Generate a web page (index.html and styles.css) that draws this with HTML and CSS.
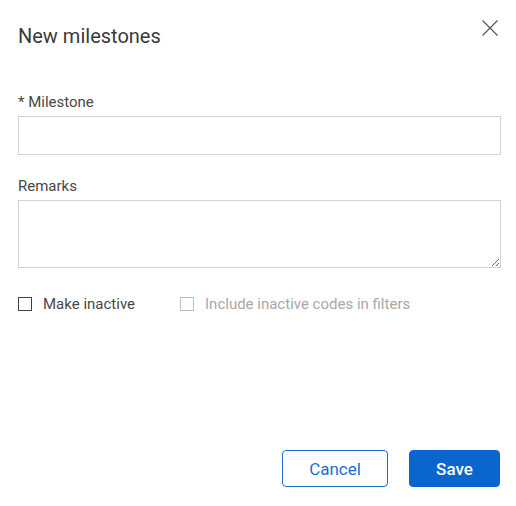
FILE: index.html
```html
<!DOCTYPE html>
<html>
<head>
<meta charset="utf-8">
<link rel="stylesheet" href="styles.css">
</head>
<body>
<div class="dialog">
  <div class="header">
    <h1 class="title">New milestones</h1>
    <button class="close" aria-label="Close">
      <svg width="16" height="16" viewBox="0 0 16 16"><path d="M0.5 0.5 L15.5 15.5 M15.5 0.5 L0.5 15.5" stroke="#555" stroke-width="1.2" fill="none"/></svg>
    </button>
  </div>
  <label class="label first">* Milestone</label>
  <input class="input" type="text">
  <label class="label">Remarks</label>
  <textarea class="textarea"></textarea>
  <div class="checks">
    <label class="check"><input type="checkbox" class="box"><span>Make inactive</span></label>
    <label class="check disabled"><input type="checkbox" class="box" disabled><span>Include inactive codes in filters</span></label>
  </div>
  <div class="footer">
    <button class="btn cancel">Cancel</button>
    <button class="btn save">Save</button>
  </div>
</div>
</body>
</html>
```
FILE: styles.css
```css
* { box-sizing: border-box; }
html, body { margin: 0; padding: 0; background: #fff; }
body { font-family: Roboto, "Liberation Sans", sans-serif; color: #333; }
.dialog {
  height: 506px;
  padding: 0 15px 19px 18px;
  display: flex;
  flex-direction: column;
}
.header {
  display: flex;
  justify-content: space-between;
  align-items: flex-start;
  padding-top: 24px;
}
.title {
  margin: 0;
  font-size: 20px;
  font-weight: 400;
  line-height: 24px;
  color: #3a3a3a;
}
.close {
  border: 0;
  background: none;
  padding: 0;
  margin: -4px 3px 0 0;
  width: 16px;
  height: 16px;
  cursor: pointer;
}
.close svg { display: block; }
.label {
  display: block;
  font-size: 15px;
  line-height: 20px;
  color: #484848;
  margin-top: 21px;
  margin-bottom: 4px;
}
.label.first { margin-top: 44px; }
.input, .textarea {
  display: block;
  width: 483px;
  border: 1px solid #d2d2d2;
  border-radius: 0;
  background: #fff;
  font-family: inherit;
  font-size: 14px;
  margin: 0;
  outline: none;
}
.input { height: 39px; }
.textarea { height: 68px; resize: vertical; }
.checks {
  display: flex;
  align-items: center;
  gap: 45px;
  margin-top: 26px;
}
.check {
  display: flex;
  align-items: center;
  gap: 11px;
  font-size: 15px;
  line-height: 20px;
  color: #484848;
}
.box {
  appearance: none;
  -webkit-appearance: none;
  width: 14px;
  height: 14px;
  margin: 0;
  border: 1px solid #444;
  background: #fff;
}
.check.disabled { color: #a8a8a8; }
.check.disabled .box { border-color: #bdbdbd; }
.footer {
  margin-top: auto;
  display: flex;
  justify-content: flex-end;
  gap: 21px;
  padding-right: 1px;
}
.btn {
  height: 37px;
  border-radius: 4px;
  font-family: inherit;
  font-size: 17px;
  cursor: pointer;
}
.cancel {
  width: 106px;
  border: 1px solid #1b6fcf;
  background: #fff;
  color: #1b6fcf;
}
.save {
  width: 91px;
  border: 1px solid #0866cc;
  background: #0866cc;
  color: #fff;
  font-weight: 500;
}
```
